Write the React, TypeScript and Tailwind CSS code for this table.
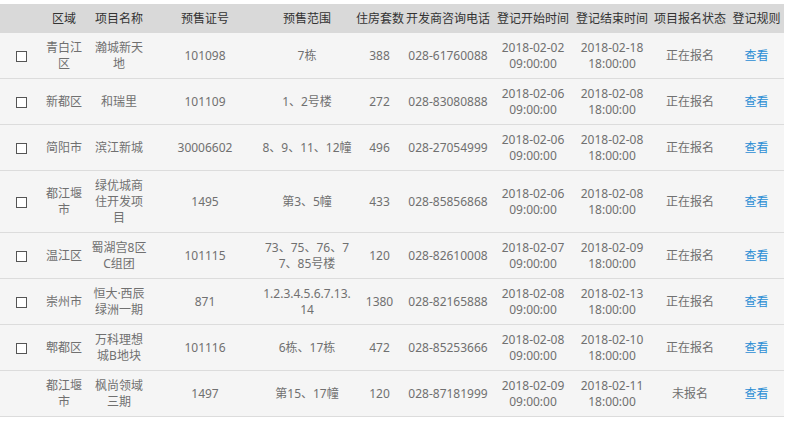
import React from 'react';

type Row = {
  checkbox: boolean;
  area: string;
  name: string;
  cert: string;
  range: string;
  units: string;
  phone: string;
  start: string;
  end: string;
  status: string;
};

const headers = [
  '',
  '区域',
  '项目名称',
  '预售证号',
  '预售范围',
  '住房套数',
  '开发商咨询电话',
  '登记开始时间',
  '登记结束时间',
  '项目报名状态',
  '登记规则',
];

const widths = ['w-[42px]', 'w-[44px]', 'w-[66px]', 'w-[106px]', 'w-[98px]', 'w-[47px]', 'w-[90px]', 'w-[80px]', 'w-[78px]', 'w-[78px]', 'w-[55px]'];

// multi-line cells keep their line breaks as in the original listing
const rows: Row[] = [
  { checkbox: true, area: '青白江\n区', name: '瀚城新天\n地', cert: '101098', range: '7栋', units: '388', phone: '028-61760088', start: '2018-02-02\n09:00:00', end: '2018-02-18\n18:00:00', status: '正在报名' },
  { checkbox: true, area: '新都区', name: '和瑞里', cert: '101109', range: '1、2号楼', units: '272', phone: '028-83080888', start: '2018-02-06\n09:00:00', end: '2018-02-08\n18:00:00', status: '正在报名' },
  { checkbox: true, area: '简阳市', name: '滨江新城', cert: '30006602', range: '8、9、11、12幢', units: '496', phone: '028-27054999', start: '2018-02-06\n09:00:00', end: '2018-02-08\n18:00:00', status: '正在报名' },
  { checkbox: true, area: '都江堰\n市', name: '绿优城商\n住开发项\n目', cert: '1495', range: '第3、5幢', units: '433', phone: '028-85856868', start: '2018-02-06\n09:00:00', end: '2018-02-08\n18:00:00', status: '正在报名' },
  { checkbox: true, area: '温江区', name: '蜀湖宫8区\nC组团', cert: '101115', range: '73、75、76、7\n7、85号楼', units: '120', phone: '028-82610008', start: '2018-02-07\n09:00:00', end: '2018-02-09\n18:00:00', status: '正在报名' },
  { checkbox: true, area: '崇州市', name: '恒大·西辰\n绿洲一期', cert: '871', range: '1.2.3.4.5.6.7.13.\n14', units: '1380', phone: '028-82165888', start: '2018-02-08\n09:00:00', end: '2018-02-13\n18:00:00', status: '正在报名' },
  { checkbox: true, area: '郫都区', name: '万科理想\n城B地块', cert: '101116', range: '6栋、17栋', units: '472', phone: '028-85253666', start: '2018-02-08\n09:00:00', end: '2018-02-10\n18:00:00', status: '正在报名' },
  { checkbox: false, area: '都江堰\n市', name: '枫尚领域\n三期', cert: '1497', range: '第15、17幢', units: '120', phone: '028-87181999', start: '2018-02-09\n09:00:00', end: '2018-02-11\n18:00:00', status: '未报名' },
];

const PresaleTable: React.FC = () => {
  const cell = 'pt-[7px] pb-[6px] px-0 text-center align-middle whitespace-pre-line';

  return (
    <div className="min-h-screen bg-white pt-1 font-['Noto_Sans','Noto_Sans_CJK_SC',sans-serif] text-[12px] leading-[16px] text-[#707070]">
      <table className="w-[784px] table-fixed border-collapse">
        <colgroup>
          {widths.map((w, i) => (
            <col key={i} className={w} />
          ))}
        </colgroup>
        <thead>
          <tr className="h-[29px] bg-[#d9d9d9] text-[#333]">
            {headers.map((h, i) => (
              <th key={i} className="px-0 text-center font-normal whitespace-nowrap">
                {h}
              </th>
            ))}
          </tr>
        </thead>
        <tbody>
          {rows.map((r, i) => (
            <tr key={i} className="border-b border-[#dcdcdc] bg-[#f5f5f5]">
              <td className={cell}>
                {r.checkbox && <span className="mx-auto block h-[11px] w-[11px] border border-[#555] bg-white" />}
              </td>
              <td className={cell}>{r.area}</td>
              <td className={cell}>{r.name}</td>
              <td className={cell}>{r.cert}</td>
              <td className={cell}>{r.range}</td>
              <td className={cell}>{r.units}</td>
              <td className={cell}>{r.phone}</td>
              <td className={cell}>{r.start}</td>
              <td className={cell}>{r.end}</td>
              <td className={cell}>{r.status}</td>
              <td className={cell}>
                <a className="cursor-pointer text-[#2a8dd4]">查看</a>
              </td>
            </tr>
          ))}
        </tbody>
      </table>
    </div>
  );
};

export default PresaleTable;
